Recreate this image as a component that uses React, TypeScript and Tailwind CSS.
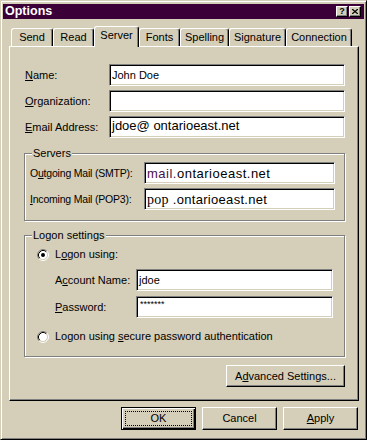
import React from 'react';

const raised =
  'border border-t-white border-l-white border-r-black border-b-black shadow-[inset_-1px_-1px_0_#808080]';
const sunken =
  'border border-t-[#808080] border-l-[#808080] border-r-white border-b-white shadow-[inset_1px_1px_0_#000,inset_-1px_-1px_0_#d5ceb8]';

const Key: React.FC<{ children: React.ReactNode }> = ({ children }) => (
  <u className="underline decoration-1 underline-offset-[1px]">{children}</u>
);

const Input: React.FC<{ className?: string; children?: React.ReactNode }> = ({ className = '', children }) => (
  <div className={`${sunken} h-[22px] bg-white flex items-center pl-[2px] shrink-0 whitespace-nowrap ${className}`}>
    {children}
  </div>
);

const Radio: React.FC<{ checked?: boolean }> = ({ checked }) => (
  <svg width="12" height="12" viewBox="0 0 12 12" className="shrink-0">
    <circle cx="6" cy="6" r="4.5" fill="#fff" />
    <path d="M2.11 9.89 A5.5 5.5 0 0 1 9.89 2.11" stroke="#808080" fill="none" />
    <path d="M9.89 2.11 A5.5 5.5 0 0 1 2.11 9.89" stroke="#fff" fill="none" />
    <path d="M2.82 9.18 A4.5 4.5 0 0 1 9.18 2.82" stroke="#000" fill="none" />
    <path d="M9.18 2.82 A4.5 4.5 0 0 1 2.82 9.18" stroke="#d5ceb8" fill="none" />
    {checked && <circle cx="6" cy="6" r="2" fill="#000" />}
  </svg>
);

const tabs = [
  { label: 'Send', w: 'w-[42px]' },
  { label: 'Read', w: 'w-[41px]' },
  { label: 'Server', w: 'w-[45px]', active: true },
  { label: 'Fonts', w: 'w-[41px]' },
  { label: 'Spelling', w: 'w-[49px]' },
  { label: 'Signature', w: 'w-[57px]' },
  { label: 'Connection', w: 'w-[66px]' },
];

const App: React.FC = () => {
  return (
    <div className="w-[367px] h-[440px] overflow-hidden bg-[#d5ceb8] text-black text-[11px] leading-[13px] font-['Liberation_Sans',Arial,sans-serif] border border-t-[#d5ceb8] border-l-[#d5ceb8] border-r-black border-b-black shadow-[inset_1px_1px_0_#fff,inset_-1px_-1px_0_#808080] pt-[3px] px-[2px]">
      {/* title bar */}
      <div className="h-[15px] bg-[#3c0038] flex items-center justify-between pl-[2px] pr-[3px]">
        <span className="text-white font-bold text-[12.5px] leading-[15px]">Options</span>
        <div className="flex gap-[1px]">
          <div className={`${raised} w-[12px] h-[11px] bg-[#d5ceb8] flex items-center justify-center text-[9px] leading-none font-bold`}>
            ?
          </div>
          <div className={`${raised} w-[12px] h-[11px] bg-[#d5ceb8] flex items-center justify-center`}>
            <svg width="6" height="5" viewBox="0 0 6 5">
              <path d="M0 0 L6 5 M6 0 L0 5" stroke="#000" strokeWidth="1.3" />
            </svg>
          </div>
        </div>
      </div>

      {/* tabs */}
      <div className="flex items-end h-[20px] mt-[7px] ml-[8px]">
        {tabs.map((t) =>
          t.active ? (
            <div
              key={t.label}
              className={`${t.w} h-[21px] -mb-[1px] relative z-10 bg-[#d5ceb8] rounded-t-[3px] border-t border-l border-r border-t-white border-l-white border-r-black shadow-[inset_-1px_0_0_#808080] flex items-center justify-center pb-[3px]`}
            >
              {t.label}
            </div>
          ) : (
            <div
              key={t.label}
              className={`${t.w} h-[18px] rounded-t-[3px] border-t border-l border-r border-t-white border-l-white border-r-black shadow-[inset_-1px_0_0_#808080] flex items-center justify-center`}
            >
              {t.label}
            </div>
          )
        )}
      </div>

      {/* panel */}
      <div className="ml-[6px] w-[350px] h-[355px] border border-t-white border-l-white border-r-black border-b-black shadow-[inset_-1px_-1px_0_#808080] pl-[14px] pt-[17px]">
        <div className="w-[321px] flex flex-col">
          <div className="flex flex-col gap-[4px]">
            <div className="flex items-center">
              <span className="w-[84px] ml-[1px]">
                <Key>N</Key>ame:
              </span>
              <Input className="w-[236px]">John Doe</Input>
            </div>
            <div className="flex items-center">
              <span className="w-[84px] ml-[1px]">
                <Key>O</Key>rganization:
              </span>
              <Input className="w-[236px]" />
            </div>
            <div className="flex items-center">
              <span className="w-[84px] ml-[1px]">
                <Key>E</Key>mail Address:
              </span>
              <Input className="w-[236px] !items-start">
                <span className="text-[13px] leading-[17px]">jdoe@ ontarioeast.net</span>
              </Input>
            </div>
          </div>

          {/* servers */}
          <fieldset className="mt-[9px] w-[321px] border border-[#808080] shadow-[inset_1px_1px_0_#fff,1px_1px_0_#fff]">
            <legend className="ml-[7px] px-[1px] h-[13px] leading-[13px] bg-[#d5ceb8]">Servers</legend>
            <div className="flex flex-col gap-[4px] pl-[5px] pt-[2px] pb-[10px]">
              <div className="flex items-center">
                <span className="w-[114px] text-[10.5px] tracking-[-0.2px]">
                  O<Key>u</Key>tgoing Mail (SMTP):
                </span>
                <Input className="w-[191px]">
                  <span className="text-[13px] tracking-[0.5px]">
                    <span className="text-[#4a1048]">mail.</span>ontarioeast.net
                  </span>
                </Input>
              </div>
              <div className="flex items-center">
                <span className="w-[114px] text-[10.5px] tracking-[-0.2px]">
                  <Key>I</Key>ncoming Mail (POP3):
                </span>
                <Input className="w-[191px]">
                  <span className="text-[13px] tracking-[0.3px]">
                    <span className="font-['Liberation_Serif',serif] text-[14px]">pop</span> .ontarioeast.net
                  </span>
                </Input>
              </div>
            </div>
          </fieldset>

          {/* logon */}
          <fieldset className="mt-[8px] w-[321px] border border-[#808080] shadow-[inset_1px_1px_0_#fff,1px_1px_0_#fff]">
            <legend className="ml-[7px] px-[1px] h-[13px] leading-[13px] bg-[#d5ceb8]">Logon settings</legend>
            <div className="flex flex-col pt-[6px] pb-[13px]">
              <div className="flex items-center gap-[6px] h-[13px] pl-[12px]">
                <Radio checked />
                <span>
                  L<Key>o</Key>gon using:
                </span>
              </div>
              <div className="flex items-center mt-[8px] pl-[30px]">
                <span className="w-[81px]">
                  A<Key>c</Key>count Name:
                </span>
                <Input className="w-[197px]">jdoe</Input>
              </div>
              <div className="flex items-center mt-[5px] pl-[30px]">
                <span className="w-[81px]">
                  <Key>P</Key>assword:
                </span>
                <Input className="w-[197px] !items-start">
                  <span className="text-[9px] leading-[9px] pt-[3px] pl-[1px]">*******</span>
                </Input>
              </div>
              <div className="flex items-center gap-[6px] h-[13px] mt-[12px] pl-[12px]">
                <Radio />
                <span>
                  Logon using <Key>s</Key>ecure password authentication
                </span>
              </div>
            </div>
          </fieldset>

          <div className={`${raised} self-end mt-[8px] w-[119px] h-[22px] flex items-center justify-center`}>
            <span>
              A<Key>d</Key>vanced Settings...
            </span>
          </div>
        </div>
      </div>

      {/* dialog buttons */}
      <div className="flex justify-end gap-[6px] pr-[6px] mt-[6px]">
        <div className="w-[75px] h-[23px] border border-black shadow-[inset_1px_1px_0_#fff,inset_-1px_-1px_0_#000,inset_-2px_-2px_0_#808080] p-[3px] flex">
          <div className="flex-1 border border-dotted border-black flex items-center justify-center">OK</div>
        </div>
        <div className={`${raised} w-[75px] h-[23px] flex items-center justify-center`}>Cancel</div>
        <div className={`${raised} w-[75px] h-[23px] flex items-center justify-center`}>
          <span>
            <Key>A</Key>pply
          </span>
        </div>
      </div>
    </div>
  );
};

export default App;
